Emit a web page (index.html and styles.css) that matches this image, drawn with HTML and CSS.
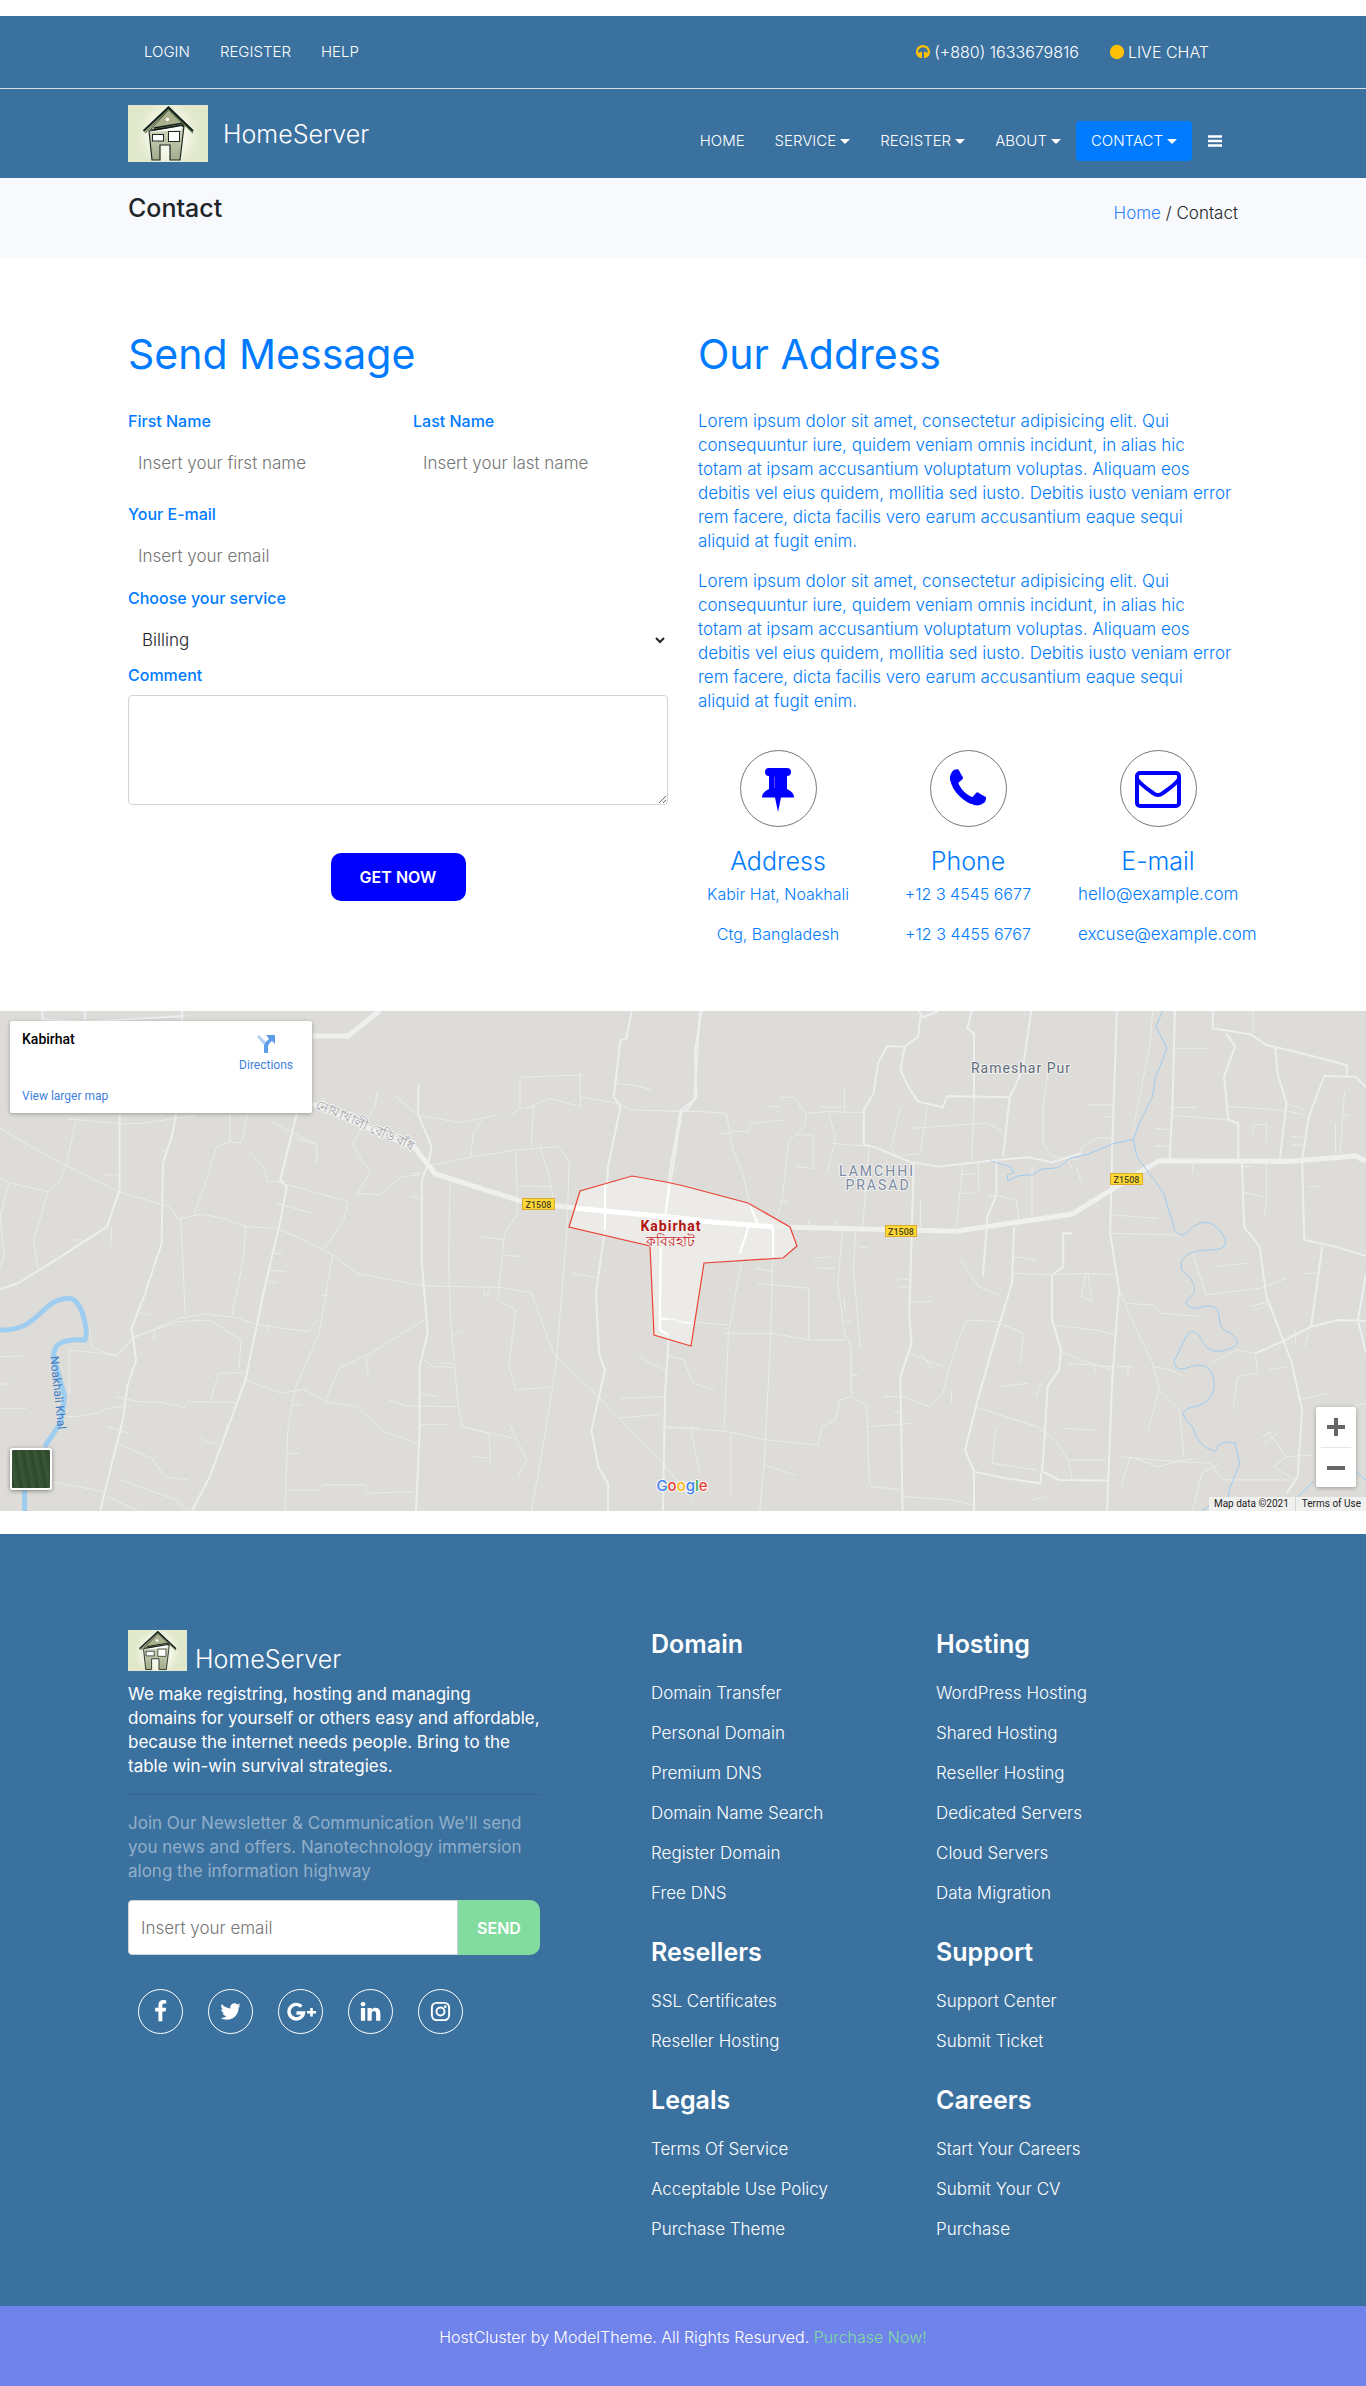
FILE: index.html
```html
<!DOCTYPE html>
<html lang="en">
<head>
<meta charset="utf-8">
<meta name="viewport" content="width=device-width, initial-scale=1">
<title>HomeServer - Contact</title>
<link rel="stylesheet" href="styles.css">
</head>
<body>
<svg class="defs" width="0" height="0" aria-hidden="true">
  <defs>
    <radialGradient id="glow"><stop offset="0" stop-color="#fff"/><stop offset=".6" stop-color="#f3f6e6"/><stop offset="1" stop-color="#e1e8cb"/></radialGradient>
    <linearGradient id="wall" x1="0" y1="0" x2="0" y2="1"><stop offset="0" stop-color="#d3d8bf"/><stop offset="1" stop-color="#a4ab8c"/></linearGradient>
  </defs>
  <symbol id="house" viewBox="0 0 80 57" preserveAspectRatio="none">
    <rect width="80" height="57" fill="#e1e8cb"/>
    <ellipse cx="40" cy="30" rx="31" ry="34" fill="url(#glow)"/>
    <path d="M21 26 56 21 52 55H42V40H32V55H24Z" fill="url(#wall)" stroke="#1f2a22" stroke-width="1.2"/>
    <path d="M22 25 40.500 5 56 20 28 24Z" fill="#a9b18e" stroke="#3b443a" stroke-width="1"/>
    <path d="M26 23 56 18M26 25 56 20" fill="none" stroke="#111c18" stroke-width="1.300"/>
    <path d="M21 27 54 21 53 25 22 27Z" fill="#fff"/>
    <path d="M17 28 40.500 4 65 28" fill="none" stroke="#6f7c4c" stroke-width="1.400"/>
    <path d="M15.500 26 40.500 2.500 65 26" fill="none" stroke="#10201d" stroke-width="2"/>
    <circle cx="39.500" cy="14.500" r="1.700" fill="#fff"/>
    <rect x="24.500" y="29.500" width="11" height="6.500" fill="#fff" stroke="#1f2a22"/>
    <rect x="40.500" y="26.500" width="11" height="10" fill="#fff" stroke="#1f2a22"/>
  </symbol>
</svg>

<header class="site-header">
  <div class="topbar">
    <div class="container topbar-row">
      <nav class="top-links" aria-label="Account">
        <a href="#">LOGIN</a><a href="#">REGISTER</a><a href="#">HELP</a>
      </nav>
      <div class="top-links">
        <a href="#"><svg class="top-icon" viewBox="0 0 16 16"><path d="M4 12.500A6 6 0 1 1 12 12.500" fill="none" stroke="#fcbf08" stroke-width="2.200"/><path d="M2.500 9 7 7.500V14H5Q3 13 2.500 9ZM13.500 9 9 7.500V14h2q2-1 2.500-5Z" fill="#fcbf08"/></svg>(+880) 1633679816</a>
        <a href="#"><svg class="top-icon" viewBox="0 0 16 16"><circle cx="8" cy="8" r="7.200" fill="#ffc107"/></svg>LIVE CHAT</a>
      </div>
    </div>
  </div>
  <div class="container nav-row">
    <a class="brand" href="#"><svg class="brand-logo"><use href="#house"/></svg>HomeServer</a>
    <nav class="main-nav" aria-label="Main">
      <a href="#">HOME</a>
      <a class="drop" href="#">SERVICE</a>
      <a class="drop" href="#">REGISTER</a>
      <a class="drop" href="#">ABOUT</a>
      <a class="drop active" href="#">CONTACT</a>
      <a href="#" aria-label="Menu"><svg class="bars" viewBox="0 0 14 14"><path d="M0 2.500h14M0 7h14M0 11.500h14" stroke="#fff" stroke-width="2.400"/></svg></a>
    </nav>
  </div>
</header>

<section class="crumb-bar">
  <div class="container crumb-row">
    <h2 class="page-title">Contact</h2>
    <p class="crumbs"><a href="#">Home</a> / Contact</p>
  </div>
</section>

<main class="container contact">
  <section class="column">
    <h1>Send Message</h1>
    <form class="message-form">
      <div class="name-row">
        <div class="field"><label for="first">First Name</label><input id="first" type="text" placeholder="Insert your first name"></div>
        <div class="field"><label for="last">Last Name</label><input id="last" type="text" placeholder="Insert your last name"></div>
      </div>
      <div class="field email-field"><label for="mail">Your E-mail</label><input id="mail" type="email" placeholder="Insert your email"></div>
      <div class="field service-field"><label for="service">Choose your service</label><select id="service"><option>Billing</option><option>Support</option></select></div>
      <div class="comment-field"><label for="comment">Comment</label><textarea id="comment"></textarea></div>
      <button class="get-now" type="submit">GET NOW</button>
    </form>
  </section>
  <section class="column">
    <h1>Our Address</h1>
    <div class="address-text">
      <p>Lorem ipsum dolor sit amet, consectetur adipisicing elit. Qui consequuntur iure, quidem veniam omnis incidunt, in alias hic totam at ipsam accusantium voluptatum voluptas. Aliquam eos debitis vel eius quidem, mollitia sed iusto. Debitis iusto veniam error rem facere, dicta facilis vero earum accusantium eaque sequi aliquid at fugit enim.</p>
      <p>Lorem ipsum dolor sit amet, consectetur adipisicing elit. Qui consequuntur iure, quidem veniam omnis incidunt, in alias hic totam at ipsam accusantium voluptatum voluptas. Aliquam eos debitis vel eius quidem, mollitia sed iusto. Debitis iusto veniam error rem facere, dicta facilis vero earum accusantium eaque sequi aliquid at fugit enim.</p>
    </div>
    <div class="ways">
      <div class="way">
        <span class="way-icon"><svg viewBox="0 0 46 46"><path d="M14 2q-4 0-4 4t4 4v13q-7 3-7 8.500h13L23 46l3-14.500h13q0-5.500-7-8.500V10q4 0 4-4t-4-4Z" fill="#00f"/><path d="M19.500 11v11" stroke="#6040ff"/></svg></span>
        <h3>Address</h3><p>Kabir Hat, Noakhali</p><p>Ctg, Bangladesh</p>
      </div>
      <div class="way">
        <span class="way-icon"><svg viewBox="0 0 1792 1792"><path fill="#00f" d="M1600 1240q0 27-10 70.500t-21 68.500q-21 50-122 106-94 51-186 51-27 0-53-3.500t-57.500-12.500-47-14.500-55.500-20.500-49-18q-98-35-175-83-127-79-264-216t-216-264q-48-77-83-175-3-9-18-49t-20.500-55.500-14.500-47-12.500-57.500-3.500-53q0-92 51-186 56-101 106-122 25-11 68.500-21t70.500-10q14 0 21 3 18 6 53 76 11 19 30 54t35 63.500 31 53.500q3 4 17.500 25t21.500 35.500 7 28.500q0 20-28.500 50t-62 55-62 53-28.500 46q0 9 5 22.500t8.500 20.500 14 24 11.500 19q76 137 174 235t235 174q2 1 19 11.500t24 14 20.500 8.500 22.500 5q18 0 46-28.500t53-62 55-62 50-28.500q14 0 28.500 7t35.500 21.500 25 17.500q25 15 53.500 31t63.500 35 54 30q70 35 76 53 3 7 3 21z"/></svg></span>
        <h3>Phone</h3><p>+12 3 4545 6677</p><p>+12 3 4455 6767</p>
      </div>
      <div class="way">
        <span class="way-icon"><svg viewBox="0 0 46 46"><g fill="none" stroke="#00f" stroke-width="4" stroke-linejoin="round"><rect x="2" y="7" width="42" height="33" rx="3"/><path d="M2 13Q5 18 18 27q5 4 10 0Q41 18 44 13"/></g></svg></span>
        <h3>E-mail</h3><p class="mail">hello@example.com</p><p class="mail">excuse@example.com</p>
      </div>
    </div>
  </section>
</main>

<section class="map" aria-label="Map of Kabirhat">
  <svg class="map-canvas" viewBox="0 0 1366 500" preserveAspectRatio="xMidYMid slice">
    <rect width="1366" height="500" fill="#dddcd8"/>
    <path d="M569 216 580 180 632 165 666 171 748 192 790 216 797 235 783 247 704 252 691 335 654 324 650 235Z" fill="#ecebe7"/>
    <!-- western half -->
    <g class="roads" transform="translate(0 -11) scale(.4464 .3333)">
      <path class="mid" d="M95 33V58L190 65 415 48M190 33V62M408 33V62M268 340V570L240 680 130 775 40 850 0 868M395 340 385 410 365 490 362 730 325 880 295 985 305 1080 285 1160 275 1260 235 1475 225 1533M665 340 628 540 642 560 630 650 590 880 550 1140 525 1230 470 1430 430 1533M1415 33 1403 117 1390 120 1375 290 1390 320 1362 500 1355 690 1335 880 1342 1060 1355 1110 1325 1290 1340 1400 1362 1450V1533M938 250 936 340 967 440 958 495 945 540 945 790 958 1000 940 1100 940 1290 932 1533M1568 33 1555 300 1525 330 1500 520 1492 650 1480 800 1480 1000 1498 1010 1490 1180 1485 1533"/>
      <path d="M0 385Q130 490 265 575L380 620 400 658 450 642 500 655 550 680 620 685 680 720 745 765 800 820 950 858 1120 862 1190 878 1240 1060 1340 1190 1485 1390 1555 1505M150 357 275 372 320 370 440 345M170 360 150 490 130 550 108 575 75 720 85 805M0 535 25 550 108 575M20 550 0 650 10 770 0 800M515 340 515 425 540 430 555 340M515 425 485 440 460 550 435 640M560 458 590 500 600 545 640 545M610 368 710 435V490M620 545 700 575 780 605 770 660 725 750M845 275 840 320 790 430 810 480 830 515 800 580 850 585 900 530 940 525M885 288 935 345 1030 368 1115 345M1055 470 1060 400 1080 360M958 498 1060 470 1155 450 1250 440M1155 450 1160 640 1130 700 1115 900 1155 930 1140 1100 1155 1170 1240 1160M1140 1270 1180 1380 1160 1430M1165 325 1195 320 1190 440M1165 325 1145 345M1165 325V232L1300 225V320L1230 295 1190 320M1300 220V290L1390 312 1410 330 1568 335M1250 440 1275 485 1270 690 1245 1100 1210 1390 1190 1533M1380 250 1420 255 1460 270M1210 440 1230 530 1240 600M1008 545 1005 790 1010 970 1025 1200 1035 1280 1150 1315M405 658 415 945M550 680 545 780 520 945M200 980 205 1040 260 1070 300 1015 400 955 460 942 545 955M155 1180V1050L260 1065 300 1010 400 965 470 960 540 1020 535 1110M545 960 580 975 690 995 715 955M745 765 715 1000 660 1170 645 1290 638 1533M950 960 830 1060 760 1105 730 1200M820 1065 825 1130M550 1140 630 1180 680 1168 735 1208 800 1220 860 1295 935 1330M150 1250Q210 1250 240 1225L275 1220M260 1190 310 1205 360 1207 415 1223 420 1205 530 1207M470 1205 490 1120 545 1118M260 1330 340 1375 370 1430 420 1440M120 1447 235 1475M270 1440 395 1500 420 1533M640 1470 715 1470 720 1455 820 1455V1480L925 1475M870 1200 910 1218 1020 1220M950 1080 970 1100 1015 1102M1035 1280 1095 1300 1100 1400M240 1490 310 1533M660 415 710 435M1075 710 1130 720M1130 765 1168 770M1280 820 1335 832M1390 1195 1490 1190M1385 1255 1480 1243M1430 1070 1490 1110M1480 1285 1568 1282M1100 860 1090 890"/>
      <path d="M0 1152H20M0 1225H60M0 1070 55 1068M600 845 620 848M600 810 640 815M610 760 635 762M620 610 700 640M600 975V1000M720 885 738 888M365 455H375M230 525H265M250 680 248 740M165 720H185M305 935 335 945M345 990V1020M450 1310Q455 1330 490 1330M240 1280 290 1300M645 1360H670M655 1215H675M940 1180 980 1190M940 1273H1000M990 1090 1015 1090M1010 1010 1035 990M1160 558 1238 560M1060 1370 1100 1375M1085 890V870M920 520H945M920 590 940 595M720 290 730 310M1455 770H1480"/>
      <path class="main" d="M850 33 780 108 700 108M700 312 930 445 975 522 1170 605 1290 625 1568 660"/>
      <path class="white" d="M1290 625 1568 660"/>
      <path class="white thin" d="M1480 740 1478 990 1498 1005M1480 955 1550 970M1500 550 1490 650M1355 690V550"/>
      <path class="river wide" d="M0 990C90 995 90 895 155 895C185 900 200 1000 190 1020C130 1015 120 1040 120 1070L145 1190 135 1270 100 1340M55 1465V1533"/>
    </g>
    <!-- eastern half -->
    <g class="roads" transform="translate(666 -11) scale(.4464 .3333)">
      <path class="mid" d="M80 33 65 150 68 290 50 325 35 335 10 550M570 50 565 110 535 140 495 138 475 190 465 280 443 330V435L465 440 545 485 610 500 740 480 810 472 865 487 930 460M535 140 525 210 545 265 565 305 620 322 630 288 770 292 785 250 800 200 818 33M565 33 575 52 610 33M685 33 675 85 690 100V300M770 292 755 470M1010 33 1000 420 995 700 1015 870 1000 1130 988 1533M1140 33 1135 300 1128 480M1225 33V85L1310 103 1345 135 1410 155 1525 195V225M1255 100 1275 140 1250 230 1260 360 1282 370V480M1365 140 1370 220 1390 310 1375 480M1568 262 1545 230 1475 228 1440 350 1425 480 1430 720 1500 740 1568 768M1290 485 1295 680 1330 740 1345 890 1400 1080 1425 1230 1415 1430 1390 1480M1470 740 1445 980 1505 960 1568 962M1445 980 1380 1025 1320 1060M1568 820 1550 960 1568 1060M555 490 545 950 550 1030 525 1130 530 1533M740 480 740 585 720 650 710 830M780 680 775 850 745 980 700 1190 670 1350 690 1415 690 1533M910 700 890 700V800L865 825 865 960 885 1050 880 1110 855 1160 845 1380 838 1450 760 1435 690 1415M845 1415 880 1440 988 1442"/>
      <path d="M255 295Q295 280 300 320L315 340 310 380 275 425 260 600 240 690 235 1000 220 1390 210 1533M0 333H60L135 340 150 450 170 510 185 600 205 670M145 395H185L190 370 265 360M315 340 365 335 440 338M365 335 380 420 360 520M370 430 440 438M585 320 570 460 510 470M525 320 505 440 515 470M550 385 600 380 650 375 720 370 755 395M690 300 685 480M855 220 845 320 845 430 865 470 925 480M930 460V440L970 412 1000 415M1090 33 1085 130 1045 400M1130 345 1260 360M1260 320 1380 330 1435 345M1140 145H1210M1315 33V100M1400 410 1430 412M1315 400V375L1345 372V425M1520 275 1510 460M1345 485V600L1340 650M1180 485V520M455 440 440 690 380 690M395 690 385 850 400 1000 415 1040V1190M425 690 420 800 435 1045M185 685 160 850 140 1000 130 1290M205 850 320 865V1020M130 1000 240 1000 320 1020 400 1020M0 960 140 975M550 840 520 835M550 905H595M570 680V600M665 490 650 680M660 780 680 820 700 860 745 885M780 770 830 780M780 820 865 825 940 820 1000 825M940 820 930 890 955 905 945 820M675 960 660 1000 640 1080 620 1180 590 1220 530 1190M675 960 740 965 800 1000 795 1090M865 975 960 990 1010 1005M885 1055 930 1080 1000 1110M1015 870 1050 980 1090 1090 1105 1170 1150 1230 1160 1370M1105 1170 1080 1290M1090 1100 1130 1110 1160 1130M1180 760 1210 885 1330 865 1390 835M1000 645 1100 655M995 700 1150 705M1030 910 1090 915 1110 940 1200 950M1320 1060 1325 1120 1280 1130 1270 1230M1320 1060 1280 1050 1220 1090M1345 1290 1390 1370 1450 1365M1390 1370 1360 1400 1410 1440M1040 1370 1020 1460M1040 1370 1100 1400 1180 1375M1240 1390 1200 1420 1180 1533M1020 1370 1100 1380 1220 1390 1245 1440 1400 1440M0 1280 140 1295 225 1320 340 1335 350 1280 380 1260 390 1200 415 1190 450 1215 455 1440 460 1460 530 1470M145 1295V1495M55 1280 75 1420M220 1395 290 1425M690 1220 830 1280Q905 1340 910 1440M740 1280 730 1390 830 1410M530 1490 640 1500 690 1515M455 1280 550 1270M0 1065 40 1080 60 1150 110 1170M1000 1100 900 1090M720 590 740 585 780 600"/>
      <path d="M225 320H255M120 400H145M345 322H395M400 265V335M290 500 330 505M330 505V405L290 405M320 660V680M380 660V680M255 605H275M200 805 240 815M330 775 370 770M340 805H380M430 740 455 745M400 890V930M850 300 855 305M945 315H1005M985 350H1005M1095 385 1130 390M1095 438H1130M1130 322H1190M1400 435H1430M1510 345H1530M1440 560H1465M520 860 545 862M510 1235H530M485 1190H525M750 1160 810 1150M840 1145 830 1190M570 1060 600 1110M545 1060 620 1100M1310 920 1350 905M1320 930 1350 915M1410 990V1030M1420 1200 1480 1180M1340 1330 1370 1300M1335 1310 1360 1295M1500 370V460M1290 500H1310M1290 575 1340 590M1390 310 1430 330M920 500 930 550M900 480 910 510M940 590 970 620M785 600 790 660M820 500V650M700 485V570M655 525 690 520M660 580H690M1035 1100V1130M960 1100V1120M1010 1100 1045 1100M1430 820H1465M1300 790 1230 800M1440 1000 1430 1040M1390 1100 1350 1110M1540 1220 1568 1210M890 1285 960 1290M900 1380H985M820 1500 850 1490M640 1210V1170M415 1125H430M415 965H400"/>
      <path class="main" d="M0 655 240 680 650 694 910 642 1070 510 1105 482 1400 484 1545 468 1568 485"/>
      <path class="white" d="M0 655 240 681"/>
      <path class="white thin" d="M185 680 165 760M240 685V770M205 670 190 620"/>
      <path class="river" d="M1112 33 1098 80 1122 145 1095 240 1090 290 1060 370 1047 418 1055 470 1115 580 1140 690Q1155 725 1180 680 1215 650 1240 690 1275 750 1220 750 1145 750 1155 810 1200 860 1175 890 1150 920 1190 925 1240 900 1240 960 1240 990 1265 1000 1295 1030 1265 1045 1220 1070 1205 1030 1180 970 1165 1010L1138 1085Q1140 1120 1175 1100 1230 1080 1228 1165 1220 1215 1170 1225 1145 1240 1180 1280 1190 1340 1230 1355 1240 1315 1275 1330L1285 1390 1262 1470 1255 1533M1047 418 1000 432 945 463 905 475 880 503 840 508 820 525 790 527 765 542 765 525 780 518 770 500 728 483M1568 1440 1545 1415M1415 1490 1450 1445M1200 1533 1220 1515"/>
    </g>
    <path d="M569 216 580 180 632 165 666 171 684 175 748 192 790 216 797 235 783 247 704 252 691 335 654 324 650 235Z" fill="none" stroke="#ea4335" stroke-width="1.200"/>
    <g class="shield">
      <rect x="522.500" y="187.500" width="32" height="11"/><text x="538.500" y="196.500">Z1508</text>
      <rect x="885.500" y="214.500" width="31" height="11"/><text x="901" y="223.500">Z1508</text>
      <rect x="1110.500" y="162.500" width="32" height="11"/><text x="1126.500" y="171.500">Z1508</text>
    </g>
    <text class="place city" x="671" y="220">Kabirhat</text>
    <text class="place city-local" x="670" y="235">কবিরহাট</text>
    <text class="place village" x="1021" y="62">Rameshar Pur</text>
    <text class="place area" x="877" y="165">LAMCHHI</text>
    <text class="place area" x="878" y="179">PRASAD</text>
    <text class="place road-name" transform="translate(363 118) rotate(24)">নোয়াখালী বেড়ি বাঁধ</text>
    <text class="river-name" transform="translate(54 382) rotate(84)">Noakhali Khal</text>
    <text class="google" x="682" y="480"><tspan fill="#4285f4">G</tspan><tspan fill="#ea4335">o</tspan><tspan fill="#fbbc05">o</tspan><tspan fill="#4285f4">g</tspan><tspan fill="#34a853">l</tspan><tspan fill="#ea4335">e</tspan></text>
  </svg>
  <div class="place-card">
    <div class="place-info"><strong>Kabirhat</strong><a href="#">View larger map</a></div>
    <a class="directions" href="#"><svg viewBox="0 0 18 18"><path d="M0 2 2 0 9 7 7 10Z" fill="#b3d1f5"/><path d="M7 18V11Q7 8 12 4L9 0h9v9l-3-3q-4 3-4 6v6Z" fill="#5e9ce8"/></svg>Directions</a>
  </div>
  <button class="satellite" type="button" aria-label="Satellite view"></button>
  <div class="zoom">
    <button type="button" aria-label="Zoom in"><svg viewBox="0 0 18 18"><path d="M9 0v18M0 9h18" stroke="#666" stroke-width="4"/></svg></button>
    <button type="button" aria-label="Zoom out"><svg viewBox="0 0 18 18"><path d="M0 9h18" stroke="#666" stroke-width="4"/></svg></button>
  </div>
  <div class="credits"><span>Map data ©2021</span><a href="#">Terms of Use</a></div>
</section>

<footer class="site-footer">
  <div class="container footer-row">
    <div class="about">
      <a class="brand footer-brand" href="#"><svg class="footer-logo"><use href="#house"/></svg>HomeServer</a>
      <p>We make registring, hosting and managing domains for yourself or others easy and affordable, because the internet needs people. Bring to the table win-win survival strategies.</p>
      <hr>
      <p class="muted">Join Our Newsletter &amp; Communication We'll send you news and offers. Nanotechnology immersion along the information highway</p>
      <form class="newsletter"><input type="email" aria-label="Email" placeholder="Insert your email"><button type="submit">SEND</button></form>
      <div class="social">
        <a href="#" aria-label="Facebook"><svg viewBox="0 0 1792 1792"><path fill="#fff" d="M1343 12v264h-157q-86 0-116 36t-30 108v189h293l-39 296h-254v759h-306v-759h-255v-296h255v-218q0-186 104-288.500t277-102.500q147 0 228 12z"/></svg></a>
        <a href="#" aria-label="Twitter"><svg viewBox="0 0 1792 1792"><path fill="#fff" d="M1684 408q-67 98-162 167 1 14 1 42 0 130-38 259.500t-115.500 248.500-184.500 210.500-258 146-323 54.500q-271 0-496-145 35 4 78 4 225 0 401-138-105-2-188-64.500t-114-159.500q33 5 61 5 43 0 85-11-112-23-185.500-111.500t-73.500-205.500v-4q68 38 146 41-66-44-105-115t-39-154q0-88 44-163 121 149 294.500 238.500t371.500 99.500q-8-38-8-74 0-134 94.500-228.500t228.500-94.500q140 0 236 102 109-21 205-78-37 115-142 178 93-10 186-50z"/></svg></a>
        <a href="#" aria-label="Google Plus"><svg class="gplus" viewBox="0 0 30 24"><path d="M15.500 6.500A7.300 7.300 0 1 0 17.500 13H10.500" fill="none" stroke="#fff" stroke-width="3.400"/><path d="M25.500 8v8.500M21 12.200h9" stroke="#fff" stroke-width="2.600"/></svg></a>
        <a href="#" aria-label="LinkedIn"><svg viewBox="0 0 1792 1792"><path fill="#fff" d="M477 625v991h-330v-991h330zm21-306q1 73-50.500 122t-135.500 49h-2q-82 0-132-49t-50-122q0-74 51.500-122.500t134.500-48.500 133 48.500 51 122.500zm1166 729v568h-329v-530q0-105-40.500-164.500t-126.500-59.500q-63 0-105.500 34.500t-63.500 85.500q-11 30-11 81v553h-329q2-399 2-647t-1-296l-1-48h329v144h-2q20-32 41-56t56.500-52 87-43.500 114.500-15.500q171 0 275 113.500t104 332.500z"/></svg></a>
        <a href="#" aria-label="Instagram"><svg viewBox="0 0 24 24"><g fill="none" stroke="#fff" stroke-width="2"><rect x="3" y="3" width="18" height="18" rx="5"/><circle cx="12" cy="12" r="4.200"/></g><circle cx="17" cy="7" r="1.400" fill="#fff"/></svg></a>
      </div>
    </div>
    <nav class="links" aria-label="Domain and legal">
      <h3>Domain</h3>
      <ul><li><a href="#">Domain Transfer</a></li><li><a href="#">Personal Domain</a></li><li><a href="#">Premium DNS</a></li><li><a href="#">Domain Name Search</a></li><li><a href="#">Register Domain</a></li><li><a href="#">Free DNS</a></li></ul>
      <h3>Resellers</h3>
      <ul><li><a href="#">SSL Certificates</a></li><li><a href="#">Reseller Hosting</a></li></ul>
      <h3>Legals</h3>
      <ul><li><a href="#">Terms Of Service</a></li><li><a href="#">Acceptable Use Policy</a></li><li><a href="#">Purchase Theme</a></li></ul>
    </nav>
    <nav class="links" aria-label="Hosting and careers">
      <h3>Hosting</h3>
      <ul><li><a href="#">WordPress Hosting</a></li><li><a href="#">Shared Hosting</a></li><li><a href="#">Reseller Hosting</a></li><li><a href="#">Dedicated Servers</a></li><li><a href="#">Cloud Servers</a></li><li><a href="#">Data Migration</a></li></ul>
      <h3>Support</h3>
      <ul><li><a href="#">Support Center</a></li><li><a href="#">Submit Ticket</a></li></ul>
      <h3>Careers</h3>
      <ul><li><a href="#">Start Your Careers</a></li><li><a href="#">Submit Your CV</a></li><li><a href="#">Purchase</a></li></ul>
    </nav>
  </div>
  <p class="copyright">HostCluster by ModelTheme. All Rights Resurved. <a href="#">Purchase Now!</a></p>
</footer>
</body>
</html>
```
FILE: styles.css
```css
* { box-sizing: border-box; }
body {
  margin: 0;
  padding-top: 16px;
  font: 300 17px/24px Inter, "Open Sans", sans-serif;
  color: #212529;
  background: #fff;
}
a { color: inherit; text-decoration: none; }
h1, h2, h3, p, ul { margin: 0; }
ul { padding: 0; list-style: none; }
input, select, textarea, button { font: inherit; margin: 0; }
svg { display: block; }
.defs { position: absolute; }
.container { width: 100%; max-width: 1140px; margin: 0 auto; padding: 0 15px; }

/* Header */
.site-header { background: #3b719f; color: #fff; }
.topbar { border-bottom: 1px solid #dee2e6; }
.topbar-row { display: flex; justify-content: space-between; height: 72px; align-items: center; }
.top-links { display: flex; font-size: 15px; }
.top-links:last-child { padding-right: 14px; font-size: 16px; }
.top-links a { display: flex; align-items: center; gap: 3px; padding: 0 15px; }
.top-links:first-child a { padding: 0 14px 0 16px; }
.top-icon { width: 16px; height: 16px; }
.nav-row { display: flex; justify-content: space-between; height: 89px; }
.brand { display: flex; align-items: center; gap: 15px; font-size: 25px; line-height: 36px; }
.brand-logo { width: 80px; height: 57px; }
.main-nav { display: flex; align-items: center; padding-top: 15px; font-size: 15px; }
.main-nav a { display: flex; align-items: center; gap: 4px; height: 40px; padding: 0 15px; border-radius: 4px; }
.main-nav a:last-child { padding: 0 16px; }
.drop::after { content: ""; border: 5px solid transparent; border-top-color: #fff; border-bottom: 0; }
.main-nav .active { background: #007bff; }
.bars { width: 14px; height: 14px; }

.crumb-bar { background: #f8f9fc; }
.crumb-row { display: flex; justify-content: space-between; height: 80px; padding-top: 15px; }
.page-title { font-size: 25px; font-weight: 500; line-height: 30px; }
.crumbs { padding-top: 8px; }
.crumbs a { color: #2f80ff; }

/* Contact */
.contact { display: grid; grid-template-columns: 1fr 1fr; column-gap: 30px; padding-top: 72px; padding-bottom: 54px; color: #007bff; }
h1 { font-size: 41px; font-weight: 400; line-height: 48px; }
.message-form { padding-top: 31px; }
label { display: block; font-size: 16px; font-weight: 500; }
.name-row { display: grid; grid-template-columns: 1fr 1fr; column-gap: 30px; }
.field input { width: 100%; height: 38px; margin-top: 11px; padding: 0 10px; border: 0; background: #fff; }
::placeholder { color: #757575; opacity: 1; }
.email-field { padding-top: 20px; }
.service-field { padding-top: 11px; }
.service-field select { display: block; width: 100%; height: 38px; margin-top: 11px; padding: 0 0 0 10px; border: 0; background: #fff; color: #212529; }
.comment-field { padding-top: 4px; }
textarea { display: block; width: 100%; height: 110px; margin-top: 8px; border: 1px solid #ced4da; border-radius: 4px; }
.get-now { display: block; width: 135px; height: 48px; margin: 48px auto 0; border: 0; border-radius: 10px; background: #00f; color: #fff; font-size: 16px; font-weight: 600; }
.address-text { display: grid; row-gap: 16px; padding: 31px 5px 0 0; }
.ways { display: grid; grid-template-columns: repeat(3, 190px); margin: 37px -15px 0; text-align: center; }
.way { display: flex; flex-direction: column; align-items: center; padding: 0 15px; }
.way-icon { display: grid; place-items: center; width: 77px; height: 77px; border: 1px solid #777; border-radius: 50%; }
.way-icon svg { width: 46px; height: 46px; }
.way h3 { margin-top: 18px; font-size: 25px; font-weight: 300; line-height: 32px; }
.way p { height: 40px; padding-top: 5px; font-size: 16px; white-space: nowrap; }
.way .mail { align-self: stretch; text-align: left; font-size: 17px; }

/* Map */
.map { position: relative; height: 500px; font-family: Roboto, sans-serif; }
.map-canvas { width: 100%; height: 500px; }
.roads path { fill: none; stroke: #ebebe9; stroke-width: 1px; vector-effect: non-scaling-stroke; }
.roads .mid { stroke: #edeeee; stroke-width: 2px; }
.roads .main { stroke: #efefee; stroke-width: 5px; }
.roads .white { stroke: #fff; stroke-width: 5px; }
.roads .thin { stroke-width: 2px; }
.roads .river { stroke: #9fcdf0; stroke-width: 1px; }
.roads .wide { stroke-width: 5px; }
.shield rect { fill: #ffd937; stroke: #dbac2c; }
.shield text { font-size: 9px; font-weight: 500; text-anchor: middle; fill: #4a4320; }
.place { text-anchor: middle; paint-order: stroke; stroke: #f2f2f0; stroke-width: 2px; }
.city { font-size: 14px; font-weight: 700; letter-spacing: 1px; fill: #b31412; }
.city-local { font-size: 14px; fill: #c5221f; }
.village { font-size: 14px; font-weight: 400; letter-spacing: 1px; fill: #5f6b7c; }
.area { font-size: 14px; font-weight: 400; letter-spacing: 2px; fill: #7b8ba3; }
.road-name { font-size: 13px; font-weight: 400; fill: #9aa0a6; }
.river-name { font-size: 12px; font-weight: 400; fill: #3f7cc4; text-anchor: middle; }
.google { font: 500 15px Inter, sans-serif; text-anchor: middle; paint-order: stroke; stroke: #f6f6f4; stroke-width: 2px; }
.place-card { position: absolute; top: 10px; left: 10px; display: flex; justify-content: space-between; width: 302px; height: 92px; padding: 9px 19px 9px 12px; border-radius: 2px; background: #fff; box-shadow: 0 1px 4px rgba(0, 0, 0, .3); font-size: 12px; line-height: 16px; }
.place-info { display: flex; flex-direction: column; justify-content: space-between; }
.place-info strong { font-size: 14px; font-weight: 500; line-height: 18px; color: #000; }
.place-card a { font-weight: 400; color: #427fde; }
.directions { display: flex; flex-direction: column; align-items: center; gap: 4px; padding-top: 5px; }
.directions svg { width: 18px; height: 18px; }
.satellite { position: absolute; left: 10px; bottom: 21px; width: 42px; height: 42px; padding: 0; border: 2px solid #fff; border-radius: 3px; background: repeating-linear-gradient(80deg, #2f4a2e 0 3px, #3a5536 3px 6px, #34502f 6px 8px); box-shadow: 0 1px 4px rgba(0, 0, 0, .4); }
.zoom { position: absolute; right: 10px; bottom: 24px; width: 40px; padding: 0 5px; border-radius: 2px; background: #fff; box-shadow: 0 1px 4px rgba(0, 0, 0, .3); }
.zoom button { display: grid; place-items: center; width: 30px; height: 40px; padding: 0; border: 0; background: none; }
.zoom button + button { border-top: 1px solid #e6e6e6; }
.zoom svg { width: 18px; height: 18px; }
.credits { position: absolute; right: 0; bottom: 0; display: flex; padding: 0 5px; background: rgba(245, 245, 245, .8); color: #222; font-size: 10px; font-weight: 400; line-height: 14px; }
.credits a { margin-left: 6px; padding-left: 6px; border-left: 1px solid #d4d4d4; }

/* Footer */
.site-footer { margin-top: 23px; background: #3b719f; color: #fff; font-weight: 400; }
.footer-row { display: flex; padding-top: 96px; padding-bottom: 65px; }
.about { width: 412px; margin-right: 111px; }
.footer-brand { align-items: flex-end; gap: 8px; height: 41px; margin-bottom: 11px; font-weight: 300; line-height: 23px; }
.footer-logo { width: 59px; height: 41px; }
hr { height: 1px; margin: 16px 0; border: 0; background: #35668f; }
.muted { color: #91afc9; }
.newsletter { display: flex; height: 55px; margin-top: 17px; }
.newsletter input { flex: 1; min-width: 0; padding: 0 12px; border: 1px solid #ced4da; border-radius: 4px 0 0 4px; background: #fff; font-weight: 300; }
.newsletter button { width: 82px; border: 0; border-radius: 0 10px 10px 0; background: #82db9f; color: #fff; font-weight: 600; font-size: 16px; }
.social { display: flex; gap: 25px; margin-top: 34px; padding-left: 10px; }
.social a { display: grid; place-items: center; width: 45px; height: 45px; border: 1px solid #fff; border-radius: 50%; }
.social svg { width: 23px; height: 23px; }
.social .gplus { width: 30px; height: 24px; }
.links { width: 285px; font-weight: 300; }
.links h3 { height: 35px; font-size: 25px; font-weight: 600; line-height: 28px; }
.links ul { margin-bottom: 33px; }
.links ul:last-child { margin-bottom: 0; }
.links li { height: 40px; padding-top: 16px; }
.copyright { height: 80px; padding-top: 19px; background: #6f83eb; font-size: 16px; font-weight: 300; text-align: center; }
.copyright a { color: #82db9f; }
```
